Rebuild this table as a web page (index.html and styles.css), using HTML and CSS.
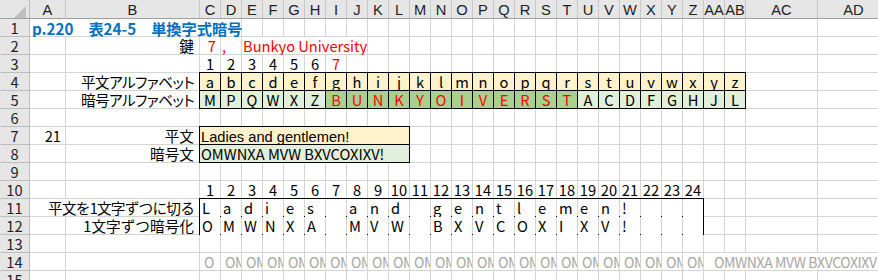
FILE: index.html
```html
<!DOCTYPE html>
<html lang="ja">
<head>
<meta charset="utf-8">
<title>p.220 表24-5 単換字式暗号</title>
<link rel="stylesheet" href="styles.css">
</head>
<body>
<div class="sheet">
  <div class="corner"><div class="tri"></div></div>
  <div class="ch">A</div><div class="ch">B</div><div class="ch">C</div><div class="ch">D</div><div class="ch">E</div><div class="ch">F</div><div class="ch">G</div><div class="ch">H</div><div class="ch">I</div><div class="ch">J</div><div class="ch">K</div><div class="ch">L</div><div class="ch">M</div><div class="ch">N</div><div class="ch">O</div><div class="ch">P</div><div class="ch">Q</div><div class="ch">R</div><div class="ch">S</div><div class="ch">T</div><div class="ch">U</div><div class="ch">V</div><div class="ch">W</div><div class="ch">X</div><div class="ch">Y</div><div class="ch">Z</div><div class="ch">AA</div><div class="ch">AB</div><div class="ch">AC</div><div class="ch">AD</div>

  <!-- row 1 -->
  <div class="rh">1</div>
  <div class="title s4"><span class="t-part">p.220</span><span class="t-part t-gap">表24-5</span><span class="t-part t-gap">単換字式暗号</span></div>
  <div></div><div></div><div></div><div></div><div></div><div></div><div></div><div></div><div></div><div></div><div></div><div></div><div></div><div></div><div></div><div></div><div></div><div></div><div></div><div></div><div></div><div></div><div></div><div></div><div></div><div></div>

  <!-- row 2 -->
  <div class="rh">2</div>
  <div></div>
  <div class="r">鍵</div>
  <div class="num red">7</div>
  <div class="l red">,</div>
  <div class="l red s6">Bunkyo University</div>
  <div></div><div></div><div></div><div></div><div></div><div></div><div></div><div></div><div></div><div></div><div></div><div></div><div></div><div></div><div></div><div></div><div></div><div></div><div></div><div></div>

  <!-- row 3 -->
  <div class="rh">3</div>
  <div></div><div></div>
  <div class="c">1</div><div class="c">2</div><div class="c">3</div><div class="c">4</div><div class="c">5</div><div class="c">6</div><div class="c red">7</div>
  <div></div><div></div><div></div><div></div><div></div><div></div><div></div><div></div><div></div><div></div><div></div><div></div><div></div><div></div><div></div><div></div><div></div><div></div><div></div><div></div><div></div>

  <!-- row 4 / 5 -->
  <div class="rh">4</div>
  <div></div>
  <div class="r kana">平文アルファベット</div>
  <div class="alpha">
    <div class="p">a</div><div class="p">b</div><div class="p">c</div><div class="p">d</div><div class="p">e</div><div class="p">f</div><div class="p">g</div><div class="p">h</div><div class="p">i</div><div class="p">j</div><div class="p">k</div><div class="p">l</div><div class="p">m</div><div class="p">n</div><div class="p">o</div><div class="p">p</div><div class="p">q</div><div class="p">r</div><div class="p">s</div><div class="p">t</div><div class="p">u</div><div class="p">v</div><div class="p">w</div><div class="p">x</div><div class="p">y</div><div class="p">z</div>
    <div class="k">M</div><div class="k">P</div><div class="k">Q</div><div class="k">W</div><div class="k">X</div><div class="k">Z</div><div class="kk">B</div><div class="kk">U</div><div class="kk">N</div><div class="kk">K</div><div class="kk">Y</div><div class="kk">O</div><div class="kk">I</div><div class="kk">V</div><div class="kk">E</div><div class="kk">R</div><div class="kk">S</div><div class="kk">T</div><div class="k">A</div><div class="k">C</div><div class="k">D</div><div class="k">F</div><div class="k">G</div><div class="k">H</div><div class="k">J</div><div class="k">L</div>
  </div>
  <div></div><div></div>
  <div class="rh">5</div>
  <div></div>
  <div class="r kana">暗号アルファベット</div>
  <div></div><div></div>

  <!-- row 6 -->
  <div class="rh">6</div>
  <div></div><div></div><div></div><div></div><div></div><div></div><div></div><div></div><div></div><div></div><div></div><div></div><div></div><div></div><div></div><div></div><div></div><div></div><div></div><div></div><div></div><div></div><div></div><div></div><div></div><div></div><div></div><div></div><div></div><div></div>

  <!-- row 7 / 8 -->
  <div class="rh">7</div>
  <div class="num">21</div>
  <div class="r">平文</div>
  <div class="msg">
    <div class="p lat">Ladies and gentlemen!</div>
    <div class="k">OMWNXA MVW BXVCOXIXV!</div>
  </div>
  <div></div><div></div><div></div><div></div><div></div><div></div><div></div><div></div><div></div><div></div><div></div><div></div><div></div><div></div><div></div><div></div><div></div><div></div>
  <div class="rh">8</div>
  <div></div>
  <div class="r">暗号文</div>
  <div></div><div></div><div></div><div></div><div></div><div></div><div></div><div></div><div></div><div></div><div></div><div></div><div></div><div></div><div></div><div></div><div></div><div></div>

  <!-- row 9 -->
  <div class="rh">9</div>
  <div></div><div></div><div></div><div></div><div></div><div></div><div></div><div></div><div></div><div></div><div></div><div></div><div></div><div></div><div></div><div></div><div></div><div></div><div></div><div></div><div></div><div></div><div></div><div></div><div></div><div></div><div></div><div></div><div></div><div></div>

  <!-- row 10 -->
  <div class="rh">10</div>
  <div></div><div></div>
  <div class="c">1</div><div class="c">2</div><div class="c">3</div><div class="c">4</div><div class="c">5</div><div class="c">6</div><div class="c">7</div><div class="c">8</div><div class="c">9</div><div class="c">10</div><div class="c">11</div><div class="c">12</div><div class="c">13</div><div class="c">14</div><div class="c">15</div><div class="c">16</div><div class="c">17</div><div class="c">18</div><div class="c">19</div><div class="c">20</div><div class="c">21</div><div class="c">22</div><div class="c">23</div><div class="c">24</div>
  <div></div><div></div><div></div><div></div>

  <!-- row 11 / 12 -->
  <div class="rh">11</div>
  <div class="r tight s2">平文を1文字ずつに切る</div>
  <div class="split">
    <div class="split-row">
      <div>L</div><div>a</div><div>d</div><div>i</div><div>e</div><div>s</div><div></div><div>a</div><div>n</div><div>d</div><div></div><div>g</div><div>e</div><div>n</div><div>t</div><div>l</div><div>e</div><div>m</div><div>e</div><div>n</div><div>!</div><div></div><div></div><div></div>
    </div>
    <div class="split-row">
      <div>O</div><div>M</div><div>W</div><div>N</div><div>X</div><div>A</div><div></div><div>M</div><div>V</div><div>W</div><div></div><div>B</div><div>X</div><div>V</div><div>C</div><div>O</div><div>X</div><div>I</div><div>X</div><div>V</div><div>!</div><div></div><div></div><div></div>
    </div>
  </div>
  <div></div><div></div><div></div><div></div>
  <div class="rh">12</div>
  <div></div>
  <div class="r">1文字ずつ暗号化</div>
  <div></div><div></div><div></div><div></div>

  <!-- row 13 -->
  <div class="rh">13</div>
  <div></div><div></div><div></div><div></div><div></div><div></div><div></div><div></div><div></div><div></div><div></div><div></div><div></div><div></div><div></div><div></div><div></div><div></div><div></div><div></div><div></div><div></div><div></div><div></div><div></div><div></div><div></div><div></div><div></div><div></div>

  <!-- row 14 -->
  <div class="rh">14</div>
  <div></div><div></div>
  <div class="acc">O</div>
  <div class="acc">OM</div>
  <div class="acc">OMW</div>
  <div class="acc">OMWN</div>
  <div class="acc">OMWNX</div>
  <div class="acc">OMWNXA</div>
  <div class="acc">OMWNXA</div>
  <div class="acc">OMWNXA M</div>
  <div class="acc">OMWNXA MV</div>
  <div class="acc">OMWNXA MVW</div>
  <div class="acc">OMWNXA MVW</div>
  <div class="acc">OMWNXA MVW B</div>
  <div class="acc">OMWNXA MVW BX</div>
  <div class="acc">OMWNXA MVW BXV</div>
  <div class="acc">OMWNXA MVW BXVC</div>
  <div class="acc">OMWNXA MVW BXVCO</div>
  <div class="acc">OMWNXA MVW BXVCOX</div>
  <div class="acc">OMWNXA MVW BXVCOXI</div>
  <div class="acc">OMWNXA MVW BXVCOXIX</div>
  <div class="acc">OMWNXA MVW BXVCOXIXV</div>
  <div class="acc">OMWNXA MVW BXVCOXIXV!</div>
  <div class="acc">OMWNXA MVW BXVCOXIXV!</div>
  <div class="acc">OMWNXA MVW BXVCOXIXV!</div>
  <div class="acc">OMWNXA MVW BXVCOXIXV!</div>
  <div class="acc acc-full s4">OMWNXA MVW BXVCOXIXV!</div>

  <!-- row 15 -->
  <div class="rh">15</div>
  <div></div><div></div><div></div><div></div><div></div><div></div><div></div><div></div><div></div><div></div><div></div><div></div><div></div><div></div><div></div><div></div><div></div><div></div><div></div><div></div><div></div><div></div><div></div><div></div><div></div><div></div><div></div><div></div><div></div><div></div>
</div>
</body>
</html>
```
FILE: styles.css
```css
html, body {
  margin: 0;
  padding: 0;
  background: #fff;
  overflow: hidden;
}

.sheet {
  display: grid;
  grid-template-columns: 29px 35px 133px repeat(26, 20px) 71px 71px;
  grid-template-rows: 18px repeat(15, 17px);
  gap: 1px;
  width: max-content;
  background: #d4d4d4;
  font-family: "Noto Sans CJK JP", "Liberation Sans", sans-serif;
  font-size: 14.67px;
  line-height: 18px;
  color: #000;
  white-space: nowrap;
}

.sheet > * {
  background: #fff;
  min-width: 0;
}

.corner {
  background: #e6e6e6;
  display: flex;
  justify-content: flex-end;
  align-items: flex-end;
  padding-right: 3px;
  box-shadow: 1px 0 0 #bdbdbd, 0 1px 0 #a0a0a0, 1px 1px 0 #a0a0a0;
}

.tri {
  width: 12px;
  height: 12px;
  background: #bfbfbf;
  clip-path: polygon(100% 0, 100% 100%, 0 100%);
}

.ch {
  background: #e6e6e6;
  color: #222;
  font-family: "Liberation Sans", "Noto Sans CJK JP", sans-serif;
  line-height: 20px;
  text-align: center;
  box-shadow: 1px 0 0 #c8c8c8, 0 1px 0 #a0a0a0, 1px 1px 0 #a0a0a0;
}

.rh {
  background: #e6e6e6;
  color: #222;
  text-align: center;
  box-shadow: 1px 0 0 #bdbdbd, 1px 1px 0 #bdbdbd;
}

.s2 { grid-column: span 2; }
.s4 { grid-column: span 4; }
.s6 { grid-column: span 6; }

.title {
  display: flex;
  color: #0070c0;
  font-weight: bold;
  font-size: 15.2px;
  padding-left: 2px;
}

.t-part {
  display: block;
}

.t-gap {
  margin-left: 15px;
}

.r {
  text-align: right;
  padding-right: 5px;
}

.kana {
  font-feature-settings: "palt";
  letter-spacing: -0.6px;
}

.tight {
  letter-spacing: -0.8px;
}

.num {
  text-align: right;
  padding-right: 4px;
}

.c { text-align: center; }
.l { padding-left: 1px; }
.red { color: #ff0000; }

.alpha {
  grid-column: span 26;
  grid-row: span 2;
  display: grid;
  grid-template-columns: repeat(26, 20px);
  grid-template-rows: 17px 17px;
  gap: 1px;
  background: #000;
  box-shadow: 0 0 0 1px #000;
}

.alpha > div {
  text-align: center;
}

.p { background: #fff2cc; }
.k { background: #e2efda; }
.kk { background: #a9d08e; color: #ff0000; }

.msg {
  grid-column: span 10;
  grid-row: span 2;
  display: grid;
  grid-template-rows: 17px 17px;
  gap: 1px;
  background: #000;
  box-shadow: 0 0 0 1px #000;
}

.msg > div {
  padding-left: 1px;
}

.lat {
  font-family: "Liberation Sans", "Noto Sans CJK JP", sans-serif;
  line-height: 20px;
}

.split {
  grid-column: span 24;
  grid-row: span 2;
  display: flex;
  flex-direction: column;
  gap: 1px;
  background: #000;
  box-shadow: 0 0 0 1px #000;
}

.split-row {
  display: grid;
  grid-template-columns: repeat(24, 20px);
  column-gap: 1px;
  height: 17px;
  background: #d4d4d4;
}

.split-row > div {
  background: #fff;
  padding-left: 2px;
}

.acc {
  color: #a6a6a6;
  font-size: 14px;
  letter-spacing: -0.4px;
  padding-left: 4px;
  overflow: hidden;
}

.acc-full {
  overflow: visible;
  padding-left: 10px;
}
```
